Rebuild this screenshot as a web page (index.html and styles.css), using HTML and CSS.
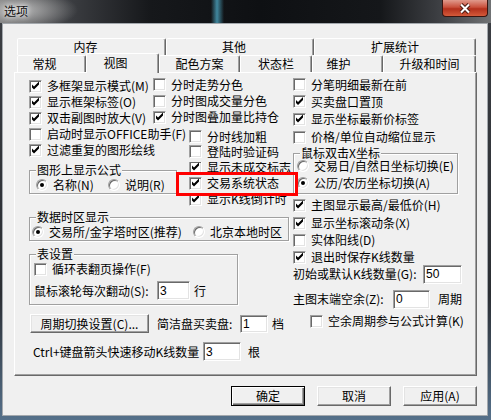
FILE: index.html
```html
<!DOCTYPE html>
<html lang="zh-CN">
<head>
    <meta charset="UTF-8">
    <title>选项</title>
    <link rel="stylesheet" href="styles.css">
</head>
<body>
    <div class="window">
        <div class="titlebar">
            <span class="title">选项</span>
            <div class="close">
                <svg width="14" height="11" viewBox="0 0 14 11">
                    <path d="M3 1.5 L11 9.5 M11 1.5 L3 9.5" stroke="#4a1c14" stroke-width="4"/>
                    <path d="M3 1.5 L11 9.5 M11 1.5 L3 9.5" stroke="#fff" stroke-width="2"/>
                </svg>
            </div>
        </div>

        <div class="client">
            <!-- tab headers, two rows -->
            <div class="tabs">
                <div class="tab-row back">
                    <div class="tab pr12">内存</div>
                    <div class="tab pr12">其他</div>
                    <div class="tab">扩展统计</div>
                </div>
                <div class="tab-row front">
                    <div class="tab pr14">常规</div>
                    <div class="tab pr14 active">视图</div>
                    <div class="tab">配色方案</div>
                    <div class="tab">状态栏</div>
                    <div class="tab pr18">维护</div>
                    <div class="tab">升级和时间</div>
                </div>
            </div>

            <div class="panel">
                <div class="left-pane">
                    <div class="upper">
                        <div class="stack-a">
                            <div class="col-a">
                                <div class="row h16"><span class="chk on"></span>多框架显示模式(M)</div>
                                <div class="row h16"><span class="chk on"></span>显示框架标签(O)</div>
                                <div class="row h16"><span class="chk on"></span>双击副图时放大(V)</div>
                                <div class="row h16"><span class="chk"></span>启动时显示OFFICE助手(F)</div>
                                <div class="row h16"><span class="chk on"></span>过滤重复的图形绘线</div>
                            </div>
                            <fieldset class="group g-formula">
                                <legend>图形上显示公式</legend>
                                <div class="gbody">
                                    <div class="row h16">
                                        <span class="opt w72"><span class="radio on"></span>名称(N)</span>
                                        <span class="opt"><span class="radio"></span>说明(R)</span>
                                    </div>
                                </div>
                            </fieldset>
                        </div>
                        <div class="stack-b">
                            <div class="col-b">
                                <div class="row h17"><span class="chk"></span>分时走势分色</div>
                                <div class="row h16"><span class="chk"></span>分时图成交量分色</div>
                                <div class="row h16"><span class="chk on"></span>分时图叠加量比持仓</div>
                            </div>
                            <div class="col-c">
                                <div class="row h15"><span class="chk"></span>分时线加粗</div>
                                <div class="row h15"><span class="chk"></span>登陆时验证码</div>
                                <div class="row h16 clip-top"><span class="chk on"></span>显示未成交标志</div>
                                <div class="row h16"><span class="chk on"></span>交易系统状态</div>
                                <div class="row h16"><span class="chk on"></span>显示K线倒计时</div>
                            </div>
                        </div>
                    </div>

                    <fieldset class="group g-zone">
                        <legend>数据时区显示</legend>
                        <div class="gbody">
                            <div class="row h16">
                                <span class="opt w161"><span class="radio on"></span>交易所/金字塔时区(推荐)</span>
                                <span class="opt"><span class="radio"></span>北京本地时区</span>
                            </div>
                        </div>
                    </fieldset>

                    <fieldset class="group g-table">
                        <legend>表设置</legend>
                        <div class="gbody">
                            <div class="row h16"><span class="chk"></span>循环表翻页操作(F)</div>
                            <div class="row h21 mt3">
                                <span class="lbl w123">鼠标滚轮每次翻动(S):</span>
                                <input class="edit w33" type="text" value="3">
                                <span class="unit">行</span>
                            </div>
                        </div>
                    </fieldset>

                    <div class="row h19 period-row">
                        <div class="btn period">周期切换设置(C)...</div>
                        <span class="lbl w83 ml8">简洁盘买卖盘:</span>
                        <input class="edit w28 h18" type="text" value="1">
                        <span class="unit">档</span>
                    </div>

                    <div class="row h19 ctrl-row">
                        <span class="lbl w170">Ctrl+键盘箭头快速移动K线数量</span>
                        <input class="edit w38" type="text" value="3">
                        <span class="unit ml7">根</span>
                    </div>
                </div>

                <div class="right-pane">
                    <div class="row h17"><span class="chk"></span>分笔明细最新在前</div>
                    <div class="row h17"><span class="chk on"></span>买卖盘口置顶</div>
                    <div class="row h18"><span class="chk on"></span>显示坐标最新价标签</div>
                    <div class="row h18"><span class="chk"></span>价格/单位自动缩位显示</div>

                    <fieldset class="group g-mouse">
                        <legend>鼠标双击X坐标</legend>
                        <div class="gbody">
                            <div class="row h12"><span class="radio"></span>交易日/自然日坐标切换(E)</div>
                            <div class="row h21"><span class="radio on"></span>公历/农历坐标切换(A)</div>
                        </div>
                    </fieldset>

                    <div class="row h18 mt2"><span class="chk on"></span>主图显示最高/最低价(H)</div>
                    <div class="row h18"><span class="chk on"></span>显示坐标滚动条(X)</div>
                    <div class="row h16"><span class="chk"></span>实体阳线(D)</div>
                    <div class="row h18"><span class="chk on"></span>退出时保存K线数量</div>

                    <div class="row h20 init-row">
                        <span class="lbl w130">初始或默认K线数量(G):</span>
                        <input class="edit w39" type="text" value="50">
                    </div>
                    <div class="row h20 mt5">
                        <span class="lbl w100">主图末端空余(Z):</span>
                        <input class="edit w37" type="text" value="0">
                        <span class="unit ml8">周期</span>
                    </div>
                    <div class="row h16 mt4 spare-row"><span class="chk"></span>空余周期参与公式计算(K)</div>
                </div>
            </div>

            <div class="buttons">
                <div class="btn default">确定</div>
                <div class="btn">取消</div>
                <div class="btn">应用(A)</div>
            </div>
        </div>

        <!-- red annotation frame -->
        <div class="highlight"></div>
    </div>
</body>
</html>
```

FILE: styles.css
```css
* {
    box-sizing: border-box;
}

body {
    margin: 0;
    width: 491px;
    height: 420px;
    overflow: hidden;
    font-family: "Noto Sans CJK SC", "Noto Sans", sans-serif;
    font-size: 12px;
    color: #000;
    background: #2d3036;
}

.window {
    position: relative;
    width: 491px;
    height: 420px;
    display: flex;
    flex-direction: column;
    background: linear-gradient(to bottom, #3c3f44 0%, #2b2e33 70%, #55708a 100%);
}

/* title bar */
.titlebar {
    height: 23px;
    display: flex;
    align-items: flex-start;
    background:
        radial-gradient(60px 20px at 18px 10px, rgba(200, 200, 200, 0.85), rgba(200, 200, 200, 0)),
        linear-gradient(to right, transparent 211px, rgba(80, 175, 205, 0.75) 217px, transparent 224px),
        linear-gradient(to right, #6e6e6e 0, #3b3d41 70px, #16181b 150px, #0e1013 260px, #15171a 380px, #3e4044 440px, #707274 491px);
}

.title {
    padding: 4px 0 0 4px;
    line-height: 14px;
    color: #111;
    text-shadow: 0 0 5px #fff, 0 0 9px rgba(255, 255, 255, 0.7);
}

.close {
    margin-left: auto;
    margin-right: 3px;
    width: 46px;
    height: 17px;
    display: flex;
    align-items: center;
    justify-content: center;
    border: 1px solid #3a1510;
    border-top: 0;
    border-radius: 0 0 4px 4px;
    background: linear-gradient(#e09a8c, #c9503c 45%, #b3301c 55%, #d45a3a);
}

/* client area */
.client {
    flex: 1;
    margin: 0 3px 4px 2px;
    border: 1px solid #a3a8ad;
    background: #f0f0f0;
    padding: 14px 10px 0 11px;
}

.tabs {
    margin-left: 3px;
    width: 459px;
}

.tab-row {
    display: flex;
    height: 17px;
}

.tab {
    display: flex;
    align-items: center;
    justify-content: center;
    border: 1px solid;
    border-bottom: 0;
    border-color: #fff #696969 transparent #fff;
    box-shadow: inset -1px 0 #a0a0a0;
    border-radius: 2px 2px 0 0;
    background: #f0f0f0;
    line-height: 12px;
    white-space: nowrap;
}

.back .tab:nth-child(1) { width: 149px; }
.back .tab:nth-child(2) { width: 148px; }
.back .tab:nth-child(3) { width: 162px; }

.front .tab:nth-child(1) { width: 69px; }
.front .tab:nth-child(2) { width: 73px; }
.front .tab:nth-child(3) { width: 81px; }
.front .tab:nth-child(4) { width: 72px; }
.front .tab:nth-child(5) { width: 71px; }
.front .tab:nth-child(6) { width: 93px; }

.tab.pr12 { padding-right: 12px; }
.tab.pr14 { padding-right: 14px; }
.tab.pr18 { padding-right: 18px; }

.tab.active {
    position: relative;
    z-index: 1;
    height: 20px;
    margin-top: -2px;
    padding-bottom: 2px;
}

.panel {
    width: 463px;
    height: 304px;
    display: flex;
    align-items: flex-start;
    padding: 3px 0 0 14px;
    border: 1px solid;
    border-color: #fff #696969 #696969 #fff;
    box-shadow: inset -1px -1px #a0a0a0;
}

.left-pane {
    width: 264px;
    flex: none;
}

.right-pane {
    flex: 1;
}

.upper {
    display: flex;
}

.stack-a {
    width: 160px;
    flex: none;
}

.stack-b {
    flex: 1;
}

.col-a {
    margin-top: 2px;
}

.col-b {
    margin-left: -36px;
}

.col-c {
    margin-top: 4px;
}

/* rows */
.row {
    display: flex;
    align-items: center;
    white-space: nowrap;
    line-height: 12px;
}

.h12 { height: 12px; }
.h15 { height: 15px; }
.h16 { height: 16px; }
.h17 { height: 17px; }
.h18 { height: 18px; }
.h19 { height: 19px; }
.h20 { height: 20px; }
.h21 { height: 21px; }

.mt2 { margin-top: 2px; }
.mt3 { margin-top: 3px; }
.mt4 { margin-top: 4px; }
.mt5 { margin-top: 5px; }
.ml7 { margin-left: 7px; }
.ml8 { margin-left: 8px; }

.clip-top {
    clip-path: inset(3px 0 0 0);
}

.opt {
    display: flex;
    align-items: center;
}

.w72 { width: 72px; }
.w161 { width: 161px; }

/* checkbox and radio */
.chk {
    flex: none;
    position: relative;
    width: 13px;
    height: 13px;
    margin-right: 5px;
    background: #fff;
    border: 1px solid;
    border-color: #a0a0a0 #fff #fff #a0a0a0;
    box-shadow: inset 1px 1px #696969, inset -1px -1px #e3e3e3;
}

.chk.on::after {
    content: "";
    position: absolute;
    left: 0;
    top: 0;
    width: 11px;
    height: 11px;
    background: #000;
    clip-path: polygon(2px 4px, 4px 6px, 9px 1px, 9px 4px, 4px 9px, 2px 7px);
}

.radio {
    flex: none;
    position: relative;
    width: 12px;
    height: 12px;
    margin-right: 5px;
    border-radius: 50%;
    background: #fff;
    border: 1px solid;
    border-color: #a0a0a0 #fff #fff #a0a0a0;
    box-shadow: inset 1px 1px #696969, inset -1px -1px #e3e3e3;
}

.radio.on::after {
    content: "";
    position: absolute;
    left: 3px;
    top: 3px;
    width: 4px;
    height: 4px;
    border-radius: 50%;
    background: #000;
}

/* group boxes */
.group {
    margin: 0;
    padding: 0;
    min-width: 0;
    border: 1px solid #a0a0a0;
    box-shadow: inset 1px 1px #fff, 1px 1px #fff;
}

.group legend {
    margin-left: 6px;
    padding: 0 1px;
    height: 14px;
    line-height: 14px;
    background: #f0f0f0;
}

.g-formula {
    width: 148px;
    margin-top: 5px;
}

.g-formula .gbody { padding-left: 6px; }

.g-zone {
    width: 260px;
    margin-top: 3px;
}

.g-zone .gbody { padding-left: 2px; }

.g-table {
    width: 209px;
    margin-top: 6px;
}

.g-table .gbody {
    padding: 0 0 3px 4px;
}

.g-mouse {
    width: 165px;
}

.g-mouse .gbody { padding-left: 3px; }

/* labels and edit boxes */
.lbl {
    flex: none;
}

.w83 { width: 83px; }
.w100 { width: 100px; }
.w123 { width: 123px; }
.w130 { width: 130px; }
.w170 { width: 170px; }

.edit {
    flex: none;
    height: 19px;
    margin: 0;
    padding: 0 2px;
    border: 1px solid;
    border-color: #a0a0a0 #fff #fff #a0a0a0;
    box-shadow: inset 1px 1px #696969, inset -1px -1px #e3e3e3;
    background: #fff;
    font-family: "Liberation Sans", Arial, sans-serif;
    font-size: 12px;
    color: #000;
    outline: none;
}

.edit.h18 { height: 18px; }
.w28 { width: 28px; }
.w33 { width: 33px; }
.w37 { width: 37px; }
.w38 { width: 38px; }
.w39 { width: 39px; }

.unit {
    margin-left: 4px;
}

.unit.ml7 { margin-left: 7px; }
.unit.ml8 { margin-left: 8px; }

.period-row {
    margin-top: 9px;
    padding-left: 1px;
}

.ctrl-row {
    margin-top: 9px;
    padding-left: 4px;
}

.init-row {
    margin-top: -2px;
}

.spare-row {
    padding-left: 17px;
}

/* push buttons */
.btn {
    flex: none;
    width: 74px;
    height: 20px;
    display: flex;
    align-items: center;
    justify-content: center;
    background: #f0f0f0;
    border: 1px solid;
    border-color: #fff #696969 #696969 #fff;
    box-shadow: inset -1px -1px #a0a0a0, inset 1px 1px #e3e3e3;
    line-height: 12px;
    white-space: nowrap;
}

.btn.default {
    border-color: #000;
    box-shadow: inset 1px 1px #fff, inset -1px -1px #696969, inset -2px -2px #a0a0a0;
}

.btn.period {
    width: 119px;
    height: 19px;
}

.buttons {
    display: flex;
    justify-content: flex-end;
    gap: 12px;
    margin-top: 10px;
}

.highlight {
    position: absolute;
    left: 176px;
    top: 172px;
    width: 122px;
    height: 24px;
    border: 3px solid #f00;
}
```
